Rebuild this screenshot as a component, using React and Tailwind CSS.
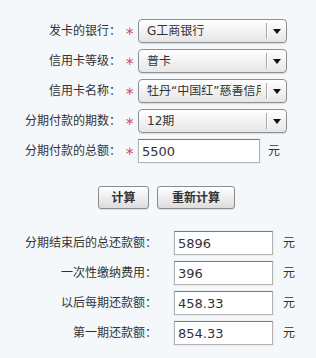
import React from "react";

const font = { fontFamily: '"DejaVu Sans", "Noto Sans CJK SC", sans-serif' };

function Star() {
  return (
    <span className="w-[17px] text-center text-[12px] leading-none text-[#d2576a]">∗</span>
  );
}

function Select({ value }) {
  return (
    <div className="flex h-[24px] w-[149px] items-center rounded-[4px] border border-[#8f8f8f] bg-gradient-to-b from-white to-[#e6e6e6] shadow-[0_1px_1px_rgba(0,0,0,0.12)]">
      <div className="mr-[5px] flex-1 overflow-hidden whitespace-nowrap pl-[8px] text-[12px] leading-none text-[#333]">
        {value}
      </div>
      <div className="h-[16px] w-px bg-[#a9a9a9] shadow-[1px_0_0_#fff]" />
      <div className="flex w-[19px] items-center justify-center">
        <svg width="8" height="5" viewBox="0 0 8 5">
          <path d="M0 0 H8 L4 5 Z" fill="#111" />
        </svg>
      </div>
    </div>
  );
}

function Field({ value, w }) {
  return (
    <div
      className={`flex h-[24px] ${w} items-center border border-[#b3b3b3] border-t-[#7c7c7c] bg-white pl-[3px] text-[13px] leading-none text-[#333] shadow-[0_0_0_1px_#e8eef2]`}
    >
      {value}
    </div>
  );
}

function TopRow({ label, children }) {
  return (
    <div className="flex h-[30px] items-center">
      <div className="w-[121px] text-right text-[12px] leading-none text-[#333]">{label}</div>
      <Star />
      {children}
    </div>
  );
}

function ResultRow({ label, value }) {
  return (
    <div className="flex h-[30px] items-center">
      <div className="w-[157px] text-right text-[12px] leading-none text-[#333]">{label}</div>
      <div className="ml-[17px]">
        <Field value={value} w="w-[99px]" />
      </div>
      <span className="ml-[10px] text-[12px] leading-none text-[#333]">元</span>
    </div>
  );
}

function Btn({ children, w }) {
  return (
    <button
      className={`flex h-[23px] ${w} items-center justify-center rounded-[3px] border border-[#8c8c8c] bg-gradient-to-b from-white to-[#dcdcdc] text-[12px] font-bold leading-none text-[#333] shadow-[0_1px_1px_rgba(0,0,0,0.1)]`}
    >
      {children}
    </button>
  );
}

export default function App() {
  return (
    <div className="h-[358px] w-[316px] bg-[#f4f8fb] pt-[16px]" style={font}>
      <TopRow label="发卡的银行：">
        <Select value="G工商银行" />
      </TopRow>
      <TopRow label="信用卡等级：">
        <Select value="普卡" />
      </TopRow>
      <TopRow label="信用卡名称：">
        <Select value="牡丹“中国红”慈善信用卡" />
      </TopRow>
      <TopRow label="分期付款的期数：">
        <Select value="12期" />
      </TopRow>
      <TopRow label="分期付款的总额：">
        <Field value="5500" w="w-[122px]" />
        <span className="ml-[8px] text-[12px] leading-none text-[#333]">元</span>
      </TopRow>

      <div className="mt-[20px] flex gap-[8px] pl-[98px]">
        <Btn w="w-[51px]">计算</Btn>
        <Btn w="w-[78px]">重新计算</Btn>
      </div>

      <div className="mt-[19px]">
        <ResultRow label="分期结束后的总还款额：" value="5896" />
        <ResultRow label="一次性缴纳费用：" value="396" />
        <ResultRow label="以后每期还款额：" value="458.33" />
        <ResultRow label="第一期还款额：" value="854.33" />
      </div>
    </div>
  );
}
